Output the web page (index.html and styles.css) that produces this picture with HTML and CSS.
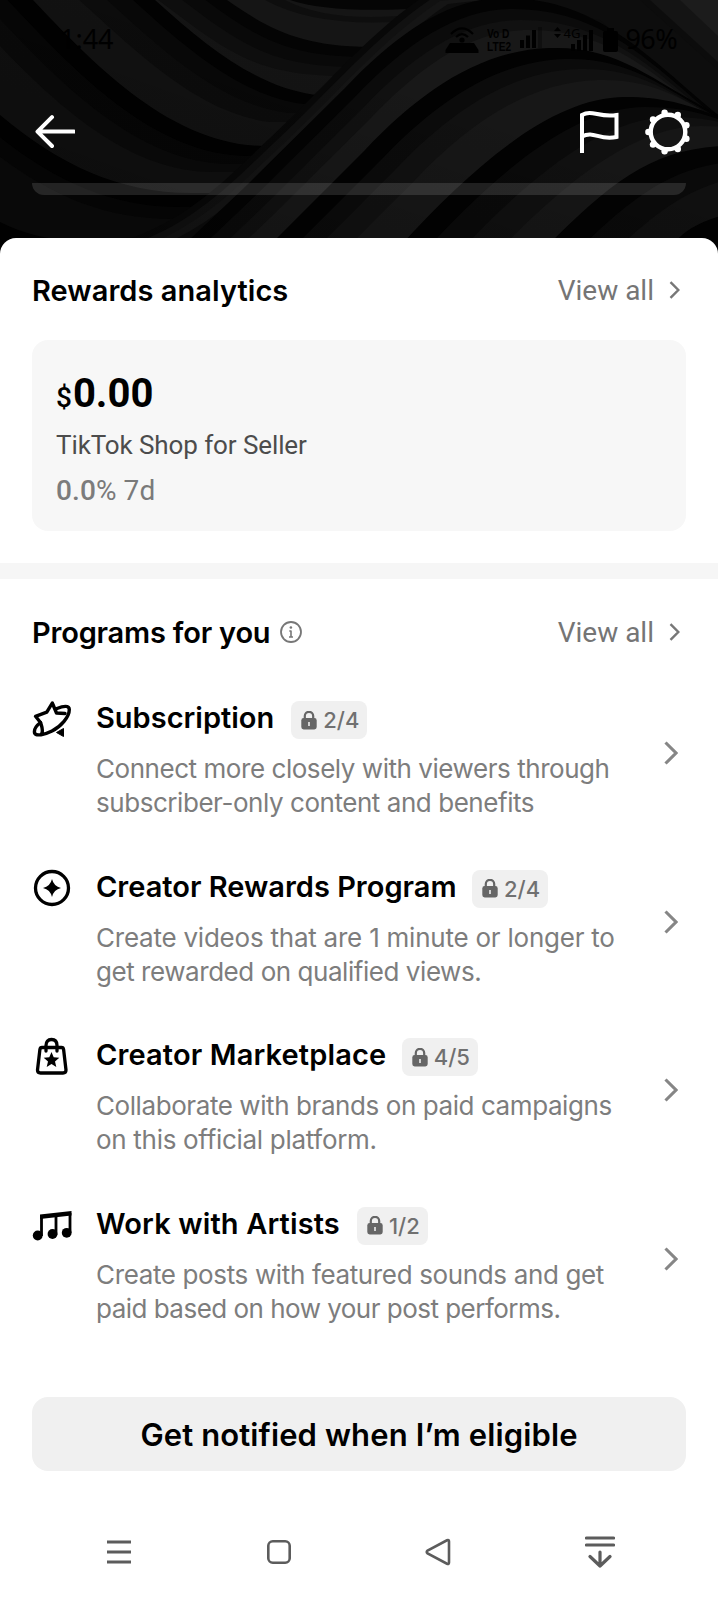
FILE: index.html
```html
<!DOCTYPE html>
<html lang="en">
<head>
<meta charset="utf-8">
<title>Rewards</title>
<link rel="stylesheet" href="styles.css">
</head>
<body>
<svg class="defs" width="0" height="0" aria-hidden="true">
  <symbol id="lock" viewBox="0 0 16 19"><path d="M3.8 8V5a4.2 4.2 0 0 1 8.4 0v3" fill="none" stroke="#666" stroke-width="2.2"/><rect x=".3" y="7" width="15.4" height="11.5" rx="2.4" fill="#666"/><path d="M8 11v4" stroke="#eee" stroke-width="1.6"/></symbol>
  <symbol id="chev" viewBox="0 0 14 24"><path d="M1.5 1.5 12 12 1.5 22.5" fill="none" stroke="#868686" stroke-width="3.100"/></symbol>
  <symbol id="chev-s" viewBox="0 0 12 18"><path d="M1.5 1.2 9.3 9 1.5 16.8" fill="none" stroke="#777" stroke-width="2.400"/></symbol>
</svg>
<header class="hero">
  <svg class="waves" viewBox="0 0 718 260" width="718" height="260" aria-hidden="true">
    <defs>
      <path id="e1" d="M160-50 227 0C270 30 300 46 370 47L460 47V400H-100V-50Z"/>
      <path id="e2" d="M100-50 155 0C210 50 260 88 316 95L420 95V400H-100V-50Z"/>
      <path id="e3" d="M-10-45 33 0C90 60 170 146 265 146L360 146V400H-150V-45Z"/>
      <path id="e4" d="M-100 20 0 115C60 165 120 194 195 193L300 193V400H-150Z"/>
      <path id="e5" d="M-100 150 0 222Q50 248 120 238L250 236V400H-150Z"/>
      <path id="a0" d="M120 242C190 220 230 175 270 138 330 82 370 32 430-8L800-50V400H100Z"/>
      <path id="a1" d="M185 244 247 185 345 88C400 30 450-2 505-2 600-2 650 60 722 118L800 180V400H20Z"/>
      <path id="a2" d="M270 245 365 150C420 92 480 50 550 48 620 46 650 80 724 118L800 160V400H100Z"/>
      <path id="a3" d="M400 246C470 170 550 97 625 97 665 97 690 105 724 119L800 150V400H250Z"/>
      <path id="a4" d="M547 246C610 184 650 149 724 146L800 150V400H390Z"/>
      <path id="a5" d="M675 242Q690 224 724 215L800 210V400H540Z"/>
      <linearGradient id="shade" x1="0" y1="1" x2="1" y2="0"><stop offset=".15" stop-color="#000" stop-opacity=".2"/><stop offset=".65" stop-color="#000" stop-opacity="0"/></linearGradient>
    </defs>
    <rect width="718" height="260" fill="#151515"/>
    <path d="M290 0Q330 14 430 8V0Z" fill="#050505"/><path d="M265 0Q320 30 420 20V14Q330 24 285 0Z" fill="#0e0e0e"/>
    <use href="#e1" fill="#040404"/><use href="#e1" fill="#090909" x="-8" y="10"/><use href="#e1" fill="#0e0e0e" x="-18" y="20"/><use href="#e1" fill="#141414" x="-30" y="29"/>
    <use href="#e2" fill="#020202"/><use href="#e2" fill="#080808" x="-12" y="9"/><use href="#e2" fill="#0c0c0c" x="-28" y="18"/><use href="#e2" fill="#121212" x="-46" y="27"/>
    <use href="#e3" fill="#010101"/><use href="#e3" fill="#060606" x="-16" y="10"/><use href="#e3" fill="#0a0a0a" x="-34" y="18"/><use href="#e3" fill="#101010" x="-52" y="26"/>
    <use href="#e4" fill="#010101"/><use href="#e4" fill="#060606" x="-10" y="14"/><use href="#e4" fill="#0b0b0b" x="-20" y="26"/>
    <use href="#e5" fill="#010101"/>
    <use href="#a0" fill="#080808"/><use href="#a0" fill="#111" x="4" y="5"/><use href="#a0" fill="#151515" x="10" y="9"/><use href="#a0" fill="#0c0c0c" x="18" y="12"/>
    <path d="M430-8Q505-22 560-20L640 0 718 70V130L600 20Z" fill="#0d0d0d"/>
    <path d="M650 0H718V62Z" fill="#141414"/><path d="M680 0H718V36Z" fill="#1c1c1c"/>
    <use href="#a1" fill="#030303"/><use href="#a1" fill="#0b0b0b" x="8" y="11"/><use href="#a1" fill="#111" x="16" y="22"/><use href="#a1" fill="#181818" x="24" y="32"/>
    <use href="#a2" fill="#020202"/><use href="#a2" fill="#0b0b0b" x="15" y="11"/><use href="#a2" fill="#111" x="29" y="21"/><use href="#a2" fill="#171717" x="48" y="32"/>
    <use href="#a3" fill="#020202"/><use href="#a3" fill="#0a0a0a" x="20" y="10"/><use href="#a3" fill="#101010" x="46" y="20"/><use href="#a3" fill="#161616" x="76" y="29"/>
    <use href="#a4" fill="#030303"/><use href="#a4" fill="#0a0a0a" x="20" y="15"/><use href="#a4" fill="#101010" x="44" y="28"/>
    <use href="#a5" fill="#020202"/>
    <rect width="718" height="260" fill="url(#shade)"/>
  </svg>
  <div class="status">
    <span class="time">1:44</span>
    <span class="status-right">
      <svg width="34" height="27" viewBox="0 0 34 27"><path d="M5 16H29L33.5 23V26H.5V23Z"/><circle cx="17" cy="13" r="2.6"/><path d="M6 7Q17-4 28 7M11 10Q17 4 23 10" fill="none" stroke="#000" stroke-width="2.2"/></svg>
      <span class="volte"><span>Vo D</span><span>LTE2</span></span>
      <svg width="24" height="21" viewBox="0 0 24 21"><path d="M0 13H4V21H0ZM6 8.500H10V21H6ZM12 3H16V21H12Z"/><path d="M18 0H22V21H18Z" opacity=".3"/></svg>
      <svg class="updown" width="7" height="12" viewBox="0 0 7 12"><path d="M0 4 3.500 0 7 4ZM0 7H7L3.500 11Z"/></svg>
      <span class="g4">4G</span>
      <svg class="bars" width="23" height="21" viewBox="0 0 23 21"><path d="M0 14H4V21H0ZM6 10H10V21H6ZM12 5H16V21H12ZM18 0H22V21H18Z"/></svg>
      <svg class="batt" width="15" height="24" viewBox="0 0 15 24"><path d="M4 0H11V3H13Q15 3 15 5V22Q15 24 13 24H2Q0 24 0 22V5Q0 3 2 3H4Z"/></svg>
      <span class="pct">96%</span>
    </span>
  </div>
  <nav class="topbar">
    <svg width="42" height="36" viewBox="0 0 42 36"><path d="M19 3.200 4.500 17.600 19 32M5 17.600H41" fill="none" stroke="#fff" stroke-width="4" stroke-linecap="round" stroke-linejoin="round"/></svg>
    <span class="actions">
      <svg width="40" height="44" viewBox="0 0 40 44"><path d="M3 43V5C13-1 20 8 37.500 5V27C20 31 15 20 3 26.500" fill="none" stroke="#fff" stroke-width="4"/></svg>
      <svg width="46" height="46" viewBox="-23 -23 46 46"><circle r="17.300" fill="none" stroke="#fff" stroke-width="4.400"/><g fill="#fff"><circle cx="-19.600" cy="0" r="3.200"/><circle cx="-15" cy="-12.600" r="3.200"/><circle cx="-3.400" cy="-19.300" r="3.200"/><circle cx="9.800" cy="-17" r="3.200"/><circle cx="18.400" cy="-6.700" r="3.200"/><circle cx="18.400" cy="6.700" r="3.200"/><circle cx="9.800" cy="17" r="3.200"/><circle cx="-3.400" cy="19.300" r="3.200"/><circle cx="-15" cy="12.600" r="3.200"/></g></svg>
    </span>
  </nav>
  <div class="peek"></div>
</header>
<main class="sheet">
  <section class="analytics">
    <div class="head"><h2 class="t1">Rewards analytics</h2><a class="all">View all<svg width="12" height="18"><use href="#chev-s"/></svg></a></div>
    <div class="card">
      <div class="money"><span class="cur">$</span>0.00</div>
      <div class="src">TikTok Shop for Seller</div>
      <div class="delta"><span class="num">0.0</span>% 7d</div>
    </div>
  </section>
  <section class="programs">
    <div class="head head2"><h2 class="t2">Programs for you</h2><svg class="info" width="22" height="22" viewBox="0 0 22 22"><circle cx="11" cy="11" r="10" fill="none" stroke="#777" stroke-width="1.800"/><path d="M11 9.500V16M9.300 10H11M9 16H13" stroke="#777" stroke-width="1.600"/><circle cx="10.900" cy="6.500" r="1.300" fill="#777"/></svg><a class="all">View all<svg width="12" height="18"><use href="#chev-s"/></svg></a></div>

    <article class="row">
      <svg class="ico" width="40" height="40" viewBox="0 0 40 40"><g fill="none" stroke="#000" stroke-width="3.400" stroke-linejoin="round" stroke-linecap="round"><path d="M8.500 22.500 3.500 16.300 14.800 12.200 20.300 3 24.500 13 33 13.500"/><path d="M25 8.500C31 6 37.300 5 37.300 9.500 37.300 17 29 26.500 20 31 12.500 34.800 4 36.500 2.600 33 1.800 29.500 4.500 25.500 8.500 22.500 9.500 26 11.500 29.500 9.800 33.500"/></g><path d="M24.500 32.500 31.500 28.500V36.500Z" fill="#000" stroke="#000" stroke-linejoin="round"/></svg>
      <div class="body"><div class="line"><h3 class="n1">Subscription</h3><span class="badge b1"><svg width="16" height="19"><use href="#lock"/></svg>2/4</span></div><p><span class="d11">Connect more closely with viewers through</span><br><span class="d12">subscriber-only content and benefits</span></p></div>
      <svg class="go" width="14" height="24"><use href="#chev"/></svg>
    </article>
    <article class="row">
      <svg class="ico" width="40" height="40" viewBox="0 0 40 40"><circle cx="20" cy="19" r="16.500" fill="none" stroke="#000" stroke-width="3.300"/><path d="M20 10Q21.700 17.300 29 19 21.700 20.700 20 28 18.300 20.700 11 19 18.300 17.300 20 10Z"/></svg>
      <div class="body"><div class="line"><h3 class="n2">Creator Rewards Program</h3><span class="badge"><svg width="16" height="19"><use href="#lock"/></svg>2/4</span></div><p><span class="d21">Create videos that are 1 minute or longer to</span><br><span class="d22">get rewarded on qualified views.</span></p></div>
      <svg class="go" width="14" height="24"><use href="#chev"/></svg>
    </article>
    <article class="row">
      <svg class="ico" width="40" height="40" viewBox="0 1 40 40"><path d="M10 11.500H29.500Q31.300 11.500 31.600 13.500L34 34Q34 37 31 37H8.500Q5.500 37 5.500 34L7.900 13.500Q8.200 11.500 10 11.500ZM14 15V9.500Q14 3.500 19.500 3.500T25 9.500V15" fill="none" stroke="#000" stroke-width="3.300" stroke-linejoin="round" stroke-linecap="round"/><path d="M19.500 16 21.700 21.200 27.300 21.700 23 25.400 24.300 30.900 19.500 28 14.700 30.900 16 25.400 11.700 21.700 17.300 21.200Z"/></svg>
      <div class="body"><div class="line"><h3 class="n3">Creator Marketplace</h3><span class="badge"><svg width="16" height="19"><use href="#lock"/></svg>4/5</span></div><p><span class="d31">Collaborate with brands on paid campaigns</span><br><span class="d32">on this official platform.</span></p></div>
      <svg class="go" width="14" height="24"><use href="#chev"/></svg>
    </article>
    <article class="row">
      <svg class="ico" width="40" height="40" viewBox="0 -1 40 40"><path d="M9.500 29V9M38 6V26M24 28V9" fill="none" stroke="#000" stroke-width="2.800"/><path d="M8 7.500 39.500 4V8.500L8 12Z"/><circle cx="5.700" cy="28.500" r="4.900"/><circle cx="20.500" cy="27" r="4.900"/><circle cx="34.700" cy="25.800" r="4.900"/></svg>
      <div class="body"><div class="line"><h3 class="n4">Work with Artists</h3><span class="badge b4"><svg width="16" height="19"><use href="#lock"/></svg>1/2</span></div><p><span class="d41">Create posts with featured sounds and get</span><br><span class="d42">paid based on how your post performs.</span></p></div>
      <svg class="go" width="14" height="24"><use href="#chev"/></svg>
    </article>
  </section>
  <button class="cta"><span>Get notified when I’m eligible</span></button>
</main>
<footer class="sysnav">
  <svg width="24" height="24" viewBox="0 0 24 24"><path d="M0 2H24M0 12H24M0 22H24" stroke="#5c5c5c" stroke-width="2.800"/></svg>
  <svg class="home" width="24" height="24" viewBox="0 0 24 24"><rect x="1.300" y="1.300" width="21.400" height="21.400" rx="4.500" fill="none" stroke="#5c5c5c" stroke-width="2.600"/></svg>
  <svg width="26" height="28" viewBox="0 0 26 28"><path d="M22 2.300Q24 1.500 24 3.500V24.500Q24 26.500 22 25.700L2.600 15.500Q.8 14 2.600 12.500Z" fill="none" stroke="#5c5c5c" stroke-width="2.600"/></svg>
  <svg width="30" height="34" viewBox="0 0 30 34"><path d="M1.500 3H28.500M1.500 10H28.500M15 17V31M5 21.500 15 31 25 21.500" fill="none" stroke="#5c5c5c" stroke-width="3.200" stroke-linecap="round" stroke-linejoin="round"/></svg>
</footer>
</body>
</html>
```
FILE: styles.css
```css
* { box-sizing: border-box; }
html, body { margin: 0; }
body { width: 718px; height: 1600px; overflow: hidden; background: #000; font-family: Inter, "Noto Sans", sans-serif; color: #000; display: flex; flex-direction: column; }
svg { display: block; flex: none; }
h2, h3, p { margin: 0; font-weight: 600; white-space: nowrap; }
.defs { position: absolute; }
.hero { position: relative; height: 238px; flex: none; }
.waves { position: absolute; left: 0; top: 0; }
.status { position: relative; display: flex; justify-content: space-between; height: 80px; padding: 24px 41px 0 60px; font: 27px/30px "Noto Sans", sans-serif; }
.pct { letter-spacing: -.6px; }
.status-right { display: flex; align-items: flex-start; }
.status-right > svg { margin-top: 3px; }
.volte { display: flex; flex-direction: column; font: bold 13px/13px "Liberation Sans", sans-serif; width: 36px; margin: 3px -3px 0 8px; white-space: nowrap; transform: scaleX(.78); transform-origin: left; }
.status-right > .updown { margin: 3px 2px 0 10px; }
.g4 { font: 13px/14px "Noto Sans", sans-serif; margin-top: 2px; width: 8px; }
.status-right > .bars { margin-top: 6px; }
.status-right > .batt { margin: 4px 7px 0 9px; }
.topbar { position: relative; display: flex; align-items: center; justify-content: space-between; height: 103px; padding: 0 27px 0 33px; }
.actions { display: flex; align-items: center; gap: 26px; }
.peek { position: relative; margin: 0 32px; height: 12px; border-radius: 0 0 14px 14px; background: rgba(255,255,255,.12); }
.sheet { position: relative; flex: none; height: 1262px; background: #fff; border-radius: 16px 16px 0 0; padding: 0 32px; }
.analytics { height: 325px; }
.head { display: flex; align-items: center; height: 102px; padding-top: 3px; }
.head2 { padding-top: 5px; }
h2 { font-size: 29px; line-height: 40px; }
.t1 { letter-spacing: .05px; }
.t2 { letter-spacing: -.2px; }
.all { margin-left: auto; margin-right: 5px; display: flex; align-items: center; gap: 15px; font: 28px/36px Roboto, sans-serif; color: #757575; white-space: nowrap; }
.all svg { margin-top: -2px; }
.card { height: 191px; background: #f7f7f7; border-radius: 16px; padding: 32px 24px; font-family: Roboto, sans-serif; white-space: nowrap; }
.money { font-size: 40px; line-height: 44px; font-weight: 700; }
.cur { font-size: 28px; font-weight: 500; letter-spacing: 1px; }
.src { font-size: 26px; line-height: 34px; margin-top: 8px; color: #4c4c4c; letter-spacing: -.1px; }
.delta { font-size: 28px; line-height: 36px; margin-top: 11px; color: #7a7a7a; letter-spacing: .1px; }
.num { color: #7c7c7c; font-weight: 500; }
.programs { margin: 0 -32px; padding: 0 32px; border-top: 16px solid #f6f6f6; height: 834px; }
.info { margin-left: 10px; margin-top: -2px; }
.row { display: flex; height: 168.600px; padding-top: 19px; }
.body { margin-left: 24px; width: 540px; }
.line { display: flex; align-items: flex-start; height: 43px; }
h3 { font-size: 29px; line-height: 36px; }
.n3, .n4 { letter-spacing: .13px; }
.badge { display: flex; align-items: center; gap: 6px; height: 38px; margin: 1px 0 0 15.500px; padding: 0 8px 0 10px; border-radius: 8px; background: #f0f0f0; color: #707070; font-size: 22px; font-weight: 500; white-space: nowrap; }
.b1, .b4 { margin-left: 17px; }
p { font-size: 26px; line-height: 34px; font-weight: 400; color: #7d7d7d; margin-top: 9px; }
.d11, .d12, .d22 { letter-spacing: -.45px; }
.d21 { letter-spacing: -.23px; }
.d31 { letter-spacing: -.42px; }
.d32 { letter-spacing: -.3px; }
.d41 { letter-spacing: -.36px; }
.d42 { letter-spacing: -.52px; }
.go { margin: 41px 0 0 27.500px; }
.cta { display: block; width: 654px; height: 74px; border: 0; border-radius: 16px; background: #f0f0f0; color: #000; font: 600 31px/40px Inter, sans-serif; letter-spacing: .12px; padding: 2px 0 0; white-space: nowrap; }
.sysnav { flex: none; height: 100px; background: #fff; display: flex; align-items: center; justify-content: space-between; padding: 4px 103px 0 107px; }
.home { margin-left: 2px; }
```
